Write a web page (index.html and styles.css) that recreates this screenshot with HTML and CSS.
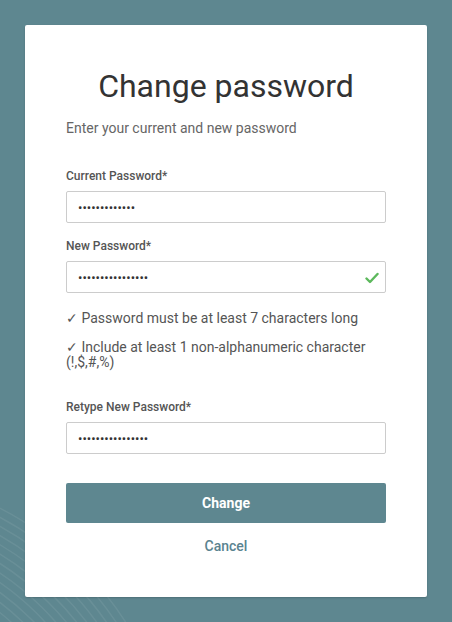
FILE: index.html
```html
<!DOCTYPE html>
<html lang="en">
<head>
<meta charset="utf-8">
<title>Change password</title>
<link rel="stylesheet" href="styles.css">
</head>
<body>
<svg class="waves" width="452" height="622" viewBox="0 0 452 622" aria-hidden="true">
  <g fill="none" stroke="#ffffff" stroke-opacity="0.07" stroke-width="1.5">
    <circle cx="-150" cy="800" r="232"/>
    <circle cx="-150" cy="800" r="240"/>
    <circle cx="-150" cy="800" r="248"/>
    <circle cx="-150" cy="800" r="256"/>
    <circle cx="-150" cy="800" r="264"/>
    <circle cx="-150" cy="800" r="272"/>
    <circle cx="-150" cy="800" r="280"/>
    <circle cx="-150" cy="800" r="288"/>
    <circle cx="-150" cy="800" r="296"/>
    <circle cx="-150" cy="800" r="304"/>
    <circle cx="-150" cy="800" r="312"/>
    <circle cx="-150" cy="800" r="320"/>
    <circle cx="-150" cy="800" r="328"/>
  </g>
</svg>
<main class="card">
  <h1 class="title">Change password</h1>
  <p class="subtitle">Enter your current and new password</p>

  <label class="label first" for="cur">Current Password*</label>
  <div class="field">
    <input class="input" id="cur" type="password" value="1234567890123">
  </div>

  <label class="label" for="new">New Password*</label>
  <div class="field">
    <input class="input" id="new" type="password" value="1234567890123456">
    <svg class="ok" width="14" height="12" viewBox="0 0 14 12" aria-hidden="true">
      <path d="M1.5 6.5 L5 10 L12.5 2" fill="none" stroke="#5cb85c" stroke-width="2.4" stroke-linecap="round" stroke-linejoin="round"/>
    </svg>
  </div>

  <ul class="rules">
    <li class="rule">✓ Password must be at least 7 characters long</li>
    <li class="rule">✓ Include at least 1 non-alphanumeric character (!,$,#,%)</li>
  </ul>

  <label class="label retype" for="re">Retype New Password*</label>
  <div class="field">
    <input class="input" id="re" type="password" value="1234567890123456">
  </div>

  <button class="btn" type="button">Change</button>
  <a class="cancel" href="#">Cancel</a>
</main>
</body>
</html>
```

FILE: styles.css
```css
* { box-sizing: border-box; }

html, body {
  margin: 0;
  padding: 0;
}

body {
  position: relative;
  min-height: 622px;
  background: #5e8790;
  padding: 25px;
  font-family: Roboto, "Liberation Sans", sans-serif;
  overflow: hidden;
}

.waves {
  position: absolute;
  left: 0;
  top: 0;
  z-index: 0;
}

.card {
  position: relative;
  z-index: 1;
  width: 402px;
  background: #ffffff;
  border-radius: 2px;
  box-shadow: 0 1px 2px rgba(0, 0, 0, 0.18);
  padding: 42px 41px 41px;
  display: flex;
  flex-direction: column;
}

.title {
  margin: 0;
  font-size: 32px;
  line-height: 38px;
  font-weight: 400;
  color: #333333;
  text-align: center;
}

.subtitle {
  margin: 13px 0 0;
  font-size: 14px;
  line-height: 20px;
  color: #666666;
}

.label {
  display: block;
  margin-top: 15px;
  margin-bottom: 7px;
  font-size: 12px;
  line-height: 16px;
  font-weight: 500;
  color: #555555;
}

.label.first { margin-top: 30px; }
.label.retype { margin-top: 29px; }

.field {
  position: relative;
}

.input {
  display: block;
  width: 320px;
  height: 32px;
  margin: 0;
  padding: 0 11px;
  border: 1px solid #cccccc;
  border-radius: 2px;
  background: #ffffff;
  font-family: Roboto, "Liberation Sans", sans-serif;
  font-size: 13px;
  color: #333333;
  outline: none;
}

.ok {
  position: absolute;
  right: 7px;
  top: 11px;
}

.rules {
  list-style: none;
  margin: 18px 0 0;
  padding: 0;
  display: flex;
  flex-direction: column;
  gap: 14px;
}

.rule {
  font-size: 14px;
  line-height: 15px;
  color: #555555;
}

.btn {
  margin-top: 29px;
  height: 40px;
  width: 320px;
  border: 0;
  border-radius: 2px;
  background: #5e8790;
  color: #ffffff;
  font-family: Roboto, "Liberation Sans", sans-serif;
  font-size: 14px;
  font-weight: 700;
  cursor: pointer;
}

.cancel {
  margin-top: 13px;
  align-self: center;
  font-size: 14px;
  line-height: 20px;
  font-weight: 500;
  color: #5a8390;
  text-decoration: none;
}
```
